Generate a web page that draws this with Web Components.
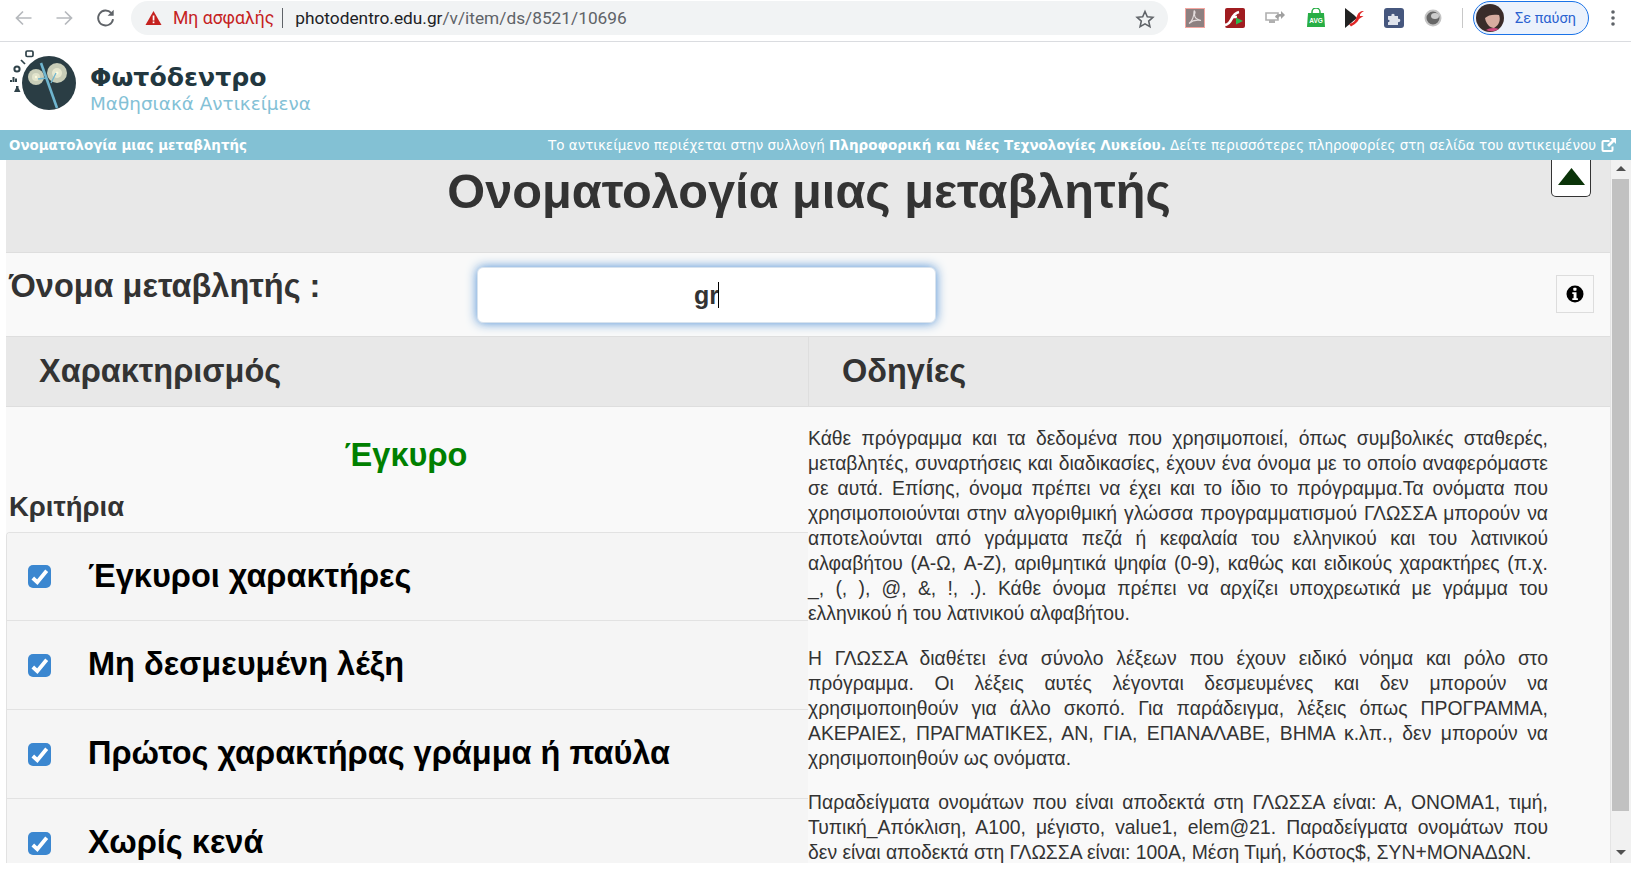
<!DOCTYPE html>
<html><head><meta charset="utf-8">
<style>
html,body{margin:0;padding:0;height:100%;background:#fff;overflow:hidden}
body{font-family:"Liberation Sans",Arial,sans-serif;color:#333}
</style></head><body>
<browser-bar></browser-bar>
<site-header></site-header>
<info-bar></info-bar>
<lo-frame>
  <lo-title>Ονοματολογία μιας μεταβλητής</lo-title>
  <name-row></name-row>
  <col-heads></col-heads>
  <two-cols>
    <result-pane slot="left"></result-pane>
    <help-text slot="right"></help-text>
  </two-cols>
</lo-frame>
<script>
function def(name, html, init){
  customElements.define(name, class extends HTMLElement{
    constructor(){super();const s=this.attachShadow({mode:'open'});s.innerHTML=html;}
    connectedCallback(){ if(init) init(this); }
  });
}
def('browser-bar',`<style>
:host{display:flex;align-items:center;height:41px;border-bottom:1px solid #dadce0;box-sizing:content-box;background:#fff;font-family:"Roboto","Liberation Sans",sans-serif;font-size:17.3px;position:relative}
.nav{display:flex;align-items:center;gap:20px;padding-left:13px;width:117px;box-sizing:border-box;flex:none;margin-top:-6px}
.nav svg{display:block;flex:none}
.omni{flex:none;width:1037px;height:34px;margin-top:-5px;border-radius:17px;background:#f1f3f4;display:flex;align-items:center;padding-left:14px;box-sizing:border-box;position:relative;margin-left:14px}
.warn{color:#c5221f;margin-left:11px;font-size:17.600px}
.sep{width:1px;height:20px;background:#5f6368;margin:0 12px 0 8px}
.url{color:#202124}.path{color:#5f6368}
.star{position:absolute;right:13px;top:8px}
.ext{display:flex;align-items:center;flex:none;margin-left:17px;margin-top:-5px;width:288px;position:relative;height:34px}
.ext svg{position:absolute;top:7px}
.vsep{position:absolute;left:277px;top:7px;width:1px;height:20px;background:#c8c8c8}
.prof{flex:none;width:116px;height:34px;margin-top:-5px;box-sizing:border-box;border:1px solid #1a73e8;border-radius:17px;background:#ecf2fc;color:#2a62d0;display:flex;align-items:center;font-size:14.500px;padding-left:2px;margin-left:0}
.prof span{margin-left:11px}
.dots{margin-left:22px;margin-top:-5px}
</style>
<div class="nav">
<svg width="21" height="20" viewBox="0 0 20 20" fill="none" stroke="#b6b9bd" stroke-width="1.700"><path d="M18 10H3M9.500 3.500L3 10l6.500 6.500"/></svg>
<svg width="21" height="20" viewBox="0 0 20 20" fill="none" stroke="#b6b9bd" stroke-width="1.700"><path d="M2 10h15M10.500 3.500L17 10l-6.500 6.500"/></svg>
<svg width="22" height="22" viewBox="0 0 20 20" fill="none" stroke="#5f6368" stroke-width="1.700"><path d="M16.400 11a6.800 6.800 0 1 1-1.700-5.600"/><path d="M17 2.500v5.500h-5.500z" fill="#5f6368" stroke="none"/></svg>
</div>
<div class="omni">
<svg width="17" height="16" viewBox="0 0 17 16"><path d="M8.500 1L16.500 15H.5z" fill="#c5221f"/><rect x="7.700" y="5.500" width="1.700" height="5" fill="#fff"/><rect x="7.700" y="11.500" width="1.700" height="1.700" fill="#fff"/></svg>
<span class="warn">Μη ασφαλής</span><span class="sep"></span><span class="url">photodentro.edu.gr<span class="path">/v/item/ds/8521/10696</span></span>
<svg class="star" width="20" height="20" viewBox="0 0 20 20" fill="none" stroke="#5f6368" stroke-width="1.600"><path d="M10 2.500l2.300 5.200 5.600.6-4.200 3.800 1.200 5.500L10 14.800l-4.900 2.800 1.200-5.500L2.100 8.300l5.600-.6z"/></svg>
</div>
<div class="ext">
<svg style="left:0" width="20" height="20" viewBox="0 0 20 20"><rect x=".5" y=".5" width="19" height="19" fill="#8d8080" stroke="#f4a6a0"/><path d="M4 15.500c3-2.500 5-7 5-12 0-1.500 2 0 .5 3 0 3 2 5 6.500 6-5-1-8.500 0-12 3z" fill="none" stroke="#e4dcdc" stroke-width="1.100"/></svg>
<svg style="left:40px" width="20" height="20" viewBox="0 0 20 20"><rect width="20" height="20" rx="2" fill="#a01c20"/><path d="M0 17c8-1 5-11 14-13" fill="none" stroke="#fff" stroke-width="2.800"/><path d="M7 9h5" stroke="#fff" stroke-width="2.500"/><path d="M11 9.500l7 3.500-7 3.500z" fill="#2db84d"/></svg>
<svg style="left:80px" width="20" height="20" viewBox="0 0 20 20" fill="#b0b0b0"><path d="M1 5h12v7H1z" fill="none" stroke="#b0b0b0" stroke-width="1.600"/><rect x="4" y="12" width="6" height="3"/><path d="M10 9c1-3 4-3 6-3V3l4 4-4 4V8.500c-2 0-3 .5-3 2.500z" fill="#a0a0a0"/></svg>
<svg style="left:121px" width="20" height="20" viewBox="0 0 20 20"><path d="M2 5h16l1 14H1z" fill="#27ae45"/><path d="M6 6V4a4 4 0 0 1 8 0v2" fill="none" stroke="#27ae45" stroke-width="1.500"/><text x="10" y="14.500" font-family="Liberation Sans" font-weight="700" font-size="6.500" text-anchor="middle" fill="#fff">AVG</text></svg>
<svg style="left:159px" width="20" height="20" viewBox="0 0 20 20"><path d="M1 0l9 7 3 3-6 5-6 5z" fill="#222"/><path d="M5 16c5-1 6-3 8-8 1-3 3-5 7-5-3 1.500-4.500 3.500-4 5h3.500l-4.500 3c-1 3-5 6-8 7.500z" fill="#e02727"/></svg>
<svg style="left:199px" width="20" height="20" viewBox="0 0 20 20"><rect width="20" height="20" rx="3" fill="#46577e"/><path d="M4 8h3.500c-1-3 4-3 3 0H14v3c3-1 3 4 0 3v3H4v-3c2 1 2-3 0-2z" fill="#dfe3ec"/></svg>
<svg style="left:238px" width="20" height="20" viewBox="0 0 20 20"><circle cx="10" cy="10" r="7.500" fill="#666" stroke="#c4c4c4" stroke-width="2"/><ellipse cx="12" cy="8" rx="4" ry="3" fill="#ccc"/></svg>
<span class="vsep"></span>
</div>
<div class="prof"><svg width="28" height="28" viewBox="0 0 28 28" style="flex:none"><circle cx="14" cy="14" r="14" fill="#3a2c2a"/><path d="M9 14c3-3 8-4 14-3 2 5 0 10-5 13-4 0-8-4-9-10z" fill="#d8aca0"/><path d="M10 26c3-2 8-3 13-1a14 14 0 0 1-13 1z" fill="#d04a80"/></svg><span>Σε παύση</span></div>
<svg class="dots" width="4" height="16" viewBox="0 0 4 16" fill="#5f6368"><circle cx="2" cy="2" r="1.800"/><circle cx="2" cy="8" r="1.800"/><circle cx="2" cy="14" r="1.800"/></svg>
`);
def('site-header',`<style>
:host{display:flex;height:88px;background:#fff;font-family:"DejaVu Sans",sans-serif;box-sizing:border-box;padding-left:10px}
svg{flex:none;display:block;margin-top:4px}
.t{margin-left:10px;display:flex;flex-direction:column;margin-top:20px}
b{font-size:25.200px;line-height:31px;color:#22373f}
span{font-size:18.400px;line-height:22px;color:#83c1d6}
</style>
<svg width="70" height="66" viewBox="10 46 70 66">
<circle cx="49" cy="83" r="27" fill="#2a3d44"/>
<circle cx="36" cy="77" r="8" fill="#c8cdb8"/><circle cx="36" cy="77" r="4" fill="#e2e4cc"/>
<circle cx="57" cy="73" r="10" fill="#c8cdb8"/><circle cx="57" cy="73" r="5" fill="#e6e7cf"/>
<circle cx="57" cy="73" r="1.500" fill="#fafae0"/><circle cx="36" cy="77" r="1.200" fill="#fafae0"/>
<path d="M41 63l16 45" stroke="#6fb5cf" stroke-width="2.600"/><path d="M38 79l9-1M51 83l5-10" stroke="#6fb5cf" stroke-width="1.300" fill="none"/>
<rect x="26" y="51" width="7" height="5.500" rx="1.200" fill="none" stroke="#2f4249" stroke-width="1.700"/>
<path d="M21 60l4 4" stroke="#2f4249" stroke-width="1.700"/>
<circle cx="17" cy="69" r="2.600" fill="none" stroke="#2f4249" stroke-width="2"/>
<path d="M11 82v-2M13.500 82v-5M16 82v-3.500" stroke="#2f4249" stroke-width="2"/>
<path d="M16 86h2.500v2l2 4h-6.500l2-4z" fill="#2f4249"/>
</svg>
<div class="t"><b>Φωτόδεντρο</b><span>Μαθησιακά Αντικείμενα</span></div>
`);
def('info-bar',`<style>
:host{display:flex;justify-content:space-between;align-items:center;height:30px;background:#83c1d4;color:#fff;font-family:"DejaVu Sans",sans-serif;font-size:13.500px;padding:0 15px 0 9px;box-sizing:border-box;white-space:nowrap}
.r{display:flex;align-items:center;gap:5px}
.l{font-size:13.400px}
svg{display:block}
</style>
<b class="l">Ονοματολογία μιας μεταβλητής</b>
<span class="r"><span>Το αντικείμενο περιέχεται στην συλλογή <b>Πληροφορική και Νέες Τεχνολογίες Λυκείου.</b> Δείτε περισσότερες πληροφορίες στη σελίδα του αντικειμένου</span>
<svg width="15" height="15" viewBox="0 0 15 15" fill="#fff"><path d="M2.500 2h6v2h-6v8h8V8.500h2V12a2 2 0 0 1-2 2h-8a2 2 0 0 1-2-2V4a2 2 0 0 1 2-2z"/><path d="M9 0h6v6l-2-2-5 5-2-2 5-5z"/></svg></span>
`);
def('lo-frame',`<style>
:host{display:block;height:703px;margin-left:6px;background:#f9f9f9;position:relative;overflow:hidden;box-sizing:border-box}
.wrap{width:1604px;height:100%;position:relative}
.top{position:absolute;right:19px;top:-2px;width:40px;height:39px;background:#fff;border:1px solid #333;border-top:0;border-radius:0 0 5px 5px;box-sizing:border-box;display:flex;align-items:center;justify-content:center;z-index:2;padding-bottom:2px}
.sb{position:absolute;left:1604px;right:0;top:0;bottom:0;background:#f1f1f1;border-left:1px solid #e4e4e4;box-sizing:border-box}
.sb .th{position:absolute;left:1px;right:2px;top:19px;bottom:52px;background:#c1c1c1}
.up,.dn{position:absolute;left:5px;width:0;height:0;border-left:5px solid transparent;border-right:5px solid transparent}
.up{top:6px;border-bottom:5px solid #505050}.dn{bottom:8px;border-top:5px solid #505050}
</style>
<div class="wrap"><slot></slot>
<div class="top"><svg width="27" height="17" viewBox="0 0 27 17"><path d="M13.500 0L27 17H0z" fill="#0a3308"/></svg></div></div>
<div class="sb"><div class="up"></div><div class="th"></div><div class="dn"></div></div>
`);
def('lo-title',`<style>
:host{display:block;height:93px;background:#e8e8e8;border-bottom:1px solid #dedede;box-sizing:border-box;text-align:center;font-size:48.700px;font-weight:700;line-height:63px;color:#333;padding-left:2px}
</style><slot></slot>`);
def('name-row',`<style>
:host{height:84px;box-sizing:border-box;border-bottom:1px solid #dedede;position:relative;display:flex;align-items:flex-start}
.l{font-weight:700;font-size:32.500px;line-height:40px;margin:13px 0 0 3px;color:#333;width:469px;flex:none}
.inp{flex:none;margin-top:14px;width:459px;height:56px;box-sizing:border-box;border:1px solid #d8e3ee;border-radius:6px;background:#fff;box-shadow:0 0 11px rgba(66,135,210,.95);display:flex;align-items:center;justify-content:center;font-weight:700;font-size:25px;color:#333;margin-left:-1px}
.car{display:inline-block;width:1px;height:26px;background:#000;vertical-align:middle;margin-left:-1px}
.info{position:absolute;left:1550px;top:22px;width:38px;height:38px;box-sizing:border-box;border:1px solid #ddd;display:flex;align-items:center;justify-content:center}
</style>
<div class="l">Όνομα μεταβλητής :</div>
<div class="inp"><span>gr</span><span class="car"></span></div>
<div class="info"><svg width="18" height="18" viewBox="0 0 18 18"><circle cx="9" cy="9" r="8.500" fill="#000"/><rect x="7.300" y="2.800" width="3.200" height="3" rx=".8" fill="#fff"/><path d="M6.300 7.200h4.200v6h1.400V15H6.300v-1.800h1.300V9H6.300z" fill="#fff"/></svg></div>
`);
def('col-heads',`<style>
:host{display:grid;grid-template-columns:802px 1fr;height:70px;background:#e8e8e8;border-bottom:1px solid #dedede;box-sizing:border-box;font-weight:700;font-size:32.500px;color:#333}
div{padding-left:33px;line-height:68px;white-space:nowrap}
div+div{border-left:1px solid #dedede}
</style><div>Χαρακτηρισμός</div><div>Οδηγίες</div>`);
def('two-cols',`<style>
:host{display:grid;grid-template-columns:802px 1fr}
</style><slot name="left"></slot><slot name="right"></slot>`);
def('result-pane',`<style>
:host{display:block;height:456px;overflow:hidden}
.v{text-align:center;color:#008000;font-weight:700;font-size:32.500px;line-height:40px;margin-top:28px;padding-right:2px}
h4{font-size:27.500px;line-height:34px;font-weight:700;color:#333;margin:15px 0 8px 3px}
ul{list-style:none;margin:0;padding:0;border-radius:4px 0 0 0;overflow:hidden;border:1px solid #e2e2e2;border-bottom:0;border-right:0}
li{height:89px;box-sizing:border-box;background:#f5f5f5;display:flex;align-items:center;font-size:32.500px;font-weight:700;color:#000;padding-left:21px;border-bottom:1px solid #e2e2e2;white-space:nowrap}
li:first-child{height:88px}
li span{margin-top:-1px}
svg{flex:none;margin-right:37px;display:block}
</style>
<div class="v">Έγκυρο</div><h4>Κριτήρια</h4>
<ul id="u"></ul>`, el=>{
 const u=el.shadowRoot.getElementById('u');
 if(u.children.length)return;
 ['Έγκυροι χαρακτήρες','Μη δεσμευμένη λέξη','Πρώτος χαρακτήρας γράμμα ή παύλα','Χωρίς κενά'].forEach(t=>{
  const li=document.createElement('li');
  li.innerHTML='<svg width="23" height="23" viewBox="0 0 23 23"><rect width="23" height="23" rx="5" fill="#3b87d0"/><path d="M4.800 13l4.500 4.200 9.400-11.500" fill="none" stroke="#fff" stroke-width="3.800"/></svg><span></span>';
  li.querySelector('span').textContent=t;u.appendChild(li);
 });
});
def('help-text',`<style>
:host{display:block;padding:19px 62px 0 0;font-size:19.350px;line-height:25px;color:#333;text-align:justify}
p{margin:0 0 19.500px}
</style>
<p>Κάθε πρόγραμμα και τα δεδομένα που χρησιμοποιεί, όπως συμβολικές σταθερές, μεταβλητές, συναρτήσεις και διαδικασίες, έχουν ένα όνομα με το οποίο αναφερόμαστε σε αυτά. Επίσης, όνομα πρέπει να έχει και το ίδιο το πρόγραμμα.Τα ονόματα που χρησιμοποιούνται στην αλγοριθμική γλώσσα προγραμματισμού ΓΛΩΣΣΑ μπορούν να αποτελούνται από γράμματα πεζά ή κεφαλαία του ελληνικού και του λατινικού αλφαβήτου (Α-Ω, A-Z), αριθμητικά ψηφία (0-9), καθώς και ειδικούς χαρακτήρες (π.χ. _,&nbsp;(, ), @, &amp;, !, .). Κάθε όνομα πρέπει να αρχίζει υποχρεωτικά με γράμμα του ελληνικού ή του λατινικού αλφαβήτου.</p>
<p>Η ΓΛΩΣΣΑ διαθέτει ένα σύνολο λέξεων που έχουν ειδικό νόημα και ρόλο στο πρόγραμμα. Οι λέξεις αυτές λέγονται δεσμευμένες και δεν μπορούν να χρησιμοποιηθούν για άλλο σκοπό. Για παράδειγμα, λέξεις όπως ΠΡΟΓΡΑΜΜΑ, ΑΚΕΡΑΙΕΣ, ΠΡΑΓΜΑΤΙΚΕΣ, ΑΝ, ΓΙΑ, ΕΠΑΝΑΛΑΒΕ, ΒΗΜΑ κ.λπ., δεν μπορούν να χρησιμοποιηθούν ως ονόματα.</p>
<p>Παραδείγματα ονομάτων που είναι αποδεκτά στη ΓΛΩΣΣΑ είναι: Α, ΟΝΟΜΑ1, τιμή, Τυπική_Απόκλιση, Α100, μέγιστο, value1, elem@21. Παραδείγματα ονομάτων που δεν είναι αποδεκτά στη ΓΛΩΣΣΑ είναι: 100Α, Μέση Τιμή, Κόστος$, ΣΥΝ+ΜΟΝΑΔΩΝ.</p>
`);
</script>
</body></html>
